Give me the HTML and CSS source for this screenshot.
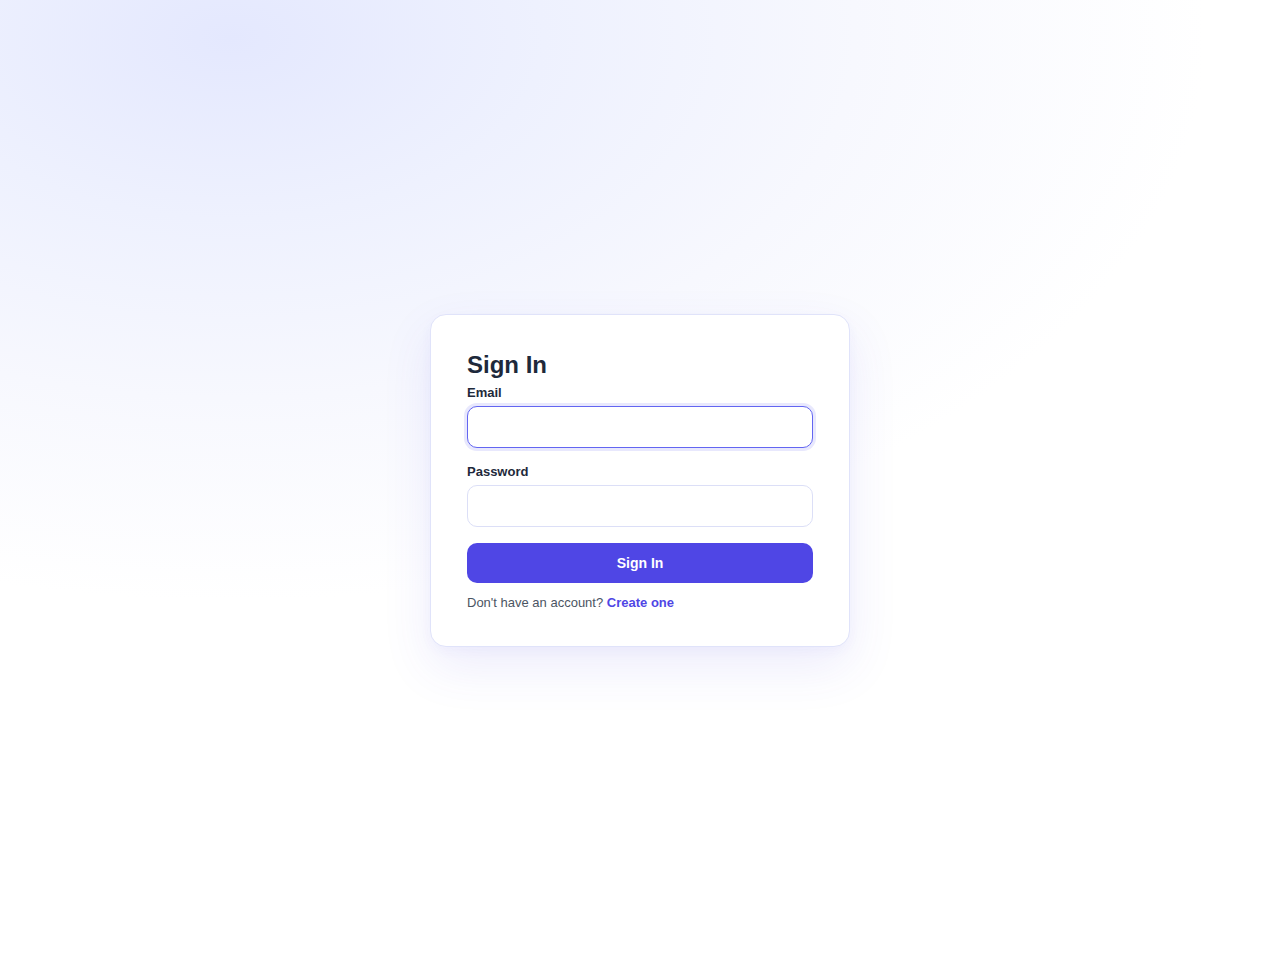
FILE: index.html
```html
<!DOCTYPE html>
<html lang="en">
<head>
<meta charset="utf-8">
<title>Sign In</title>
<link rel="stylesheet" href="styles.css">
</head>
<body>
<main class="page">
  <form class="card">
    <h1 class="title">Sign In</h1>
    <div class="field">
      <label class="label" for="email">Email</label>
      <input class="input input-focus" id="email" type="email">
    </div>
    <div class="field">
      <label class="label" for="password">Password</label>
      <input class="input" id="password" type="password">
    </div>
    <button class="btn" type="button">Sign In</button>
    <p class="note">Don't have an account? <a class="link" href="#">Create one</a></p>
  </form>
</main>
</body>
</html>
```
FILE: styles.css
```css
* { box-sizing: border-box; }
html, body { margin: 0; height: 100%; }
body {
  font-family: "Liberation Sans", Arial, sans-serif;
  color: #1e293b;
  background:
    radial-gradient(ellipse 1250px 720px at 18% 4%, #e4e8fe 0%, #eef1fe 25%, #f7f8fe 50%, #ffffff 78%);
  background-color: #ffffff;
}
.page {
  height: 960px;
  display: flex;
  justify-content: center;
  align-items: flex-start;
  padding-top: 314px;
}
.card {
  width: 420px;
  background: #ffffff;
  border: 1px solid #e0e3fa;
  border-radius: 16px;
  padding: 35px 36px 34px;
  display: flex;
  flex-direction: column;
  gap: 14px;
  box-shadow: 0 20px 50px rgba(79, 70, 229, 0.10), 0 4px 12px rgba(79, 70, 229, 0.04);
}
.title {
  margin: 0 0 -10px;
  font-size: 24px;
  line-height: 29px;
  font-weight: 700;
  color: #1e293b;
}
.field {
  display: flex;
  flex-direction: column;
  gap: 5px;
}
.label {
  padding-top: 2px;
  font-size: 13px;
  line-height: 16px;
  font-weight: 700;
  color: #1e293b;
}
.input {
  flex: none;
  height: 42px;
  width: 100%;
  border: 1px solid #dcdff7;
  border-radius: 10px;
  background: #ffffff;
  padding: 0 12px;
  font: inherit;
  outline: none;
}
.input-focus {
  border-color: #6366f1;
  box-shadow: 0 0 0 3px rgba(99, 102, 241, 0.15);
}
.btn {
  flex: none;
  height: 40px;
  margin-top: 2px;
  border: none;
  border-radius: 10px;
  background: #4f46e5;
  color: #ffffff;
  font-family: inherit;
  font-size: 14px;
  font-weight: 700;
}
.note {
  margin: -3px 0 0;
  font-size: 13px;
  line-height: 18px;
  color: #4b5563;
}
.link {
  color: #4f46e5;
  font-weight: 700;
  text-decoration: none;
}
```
